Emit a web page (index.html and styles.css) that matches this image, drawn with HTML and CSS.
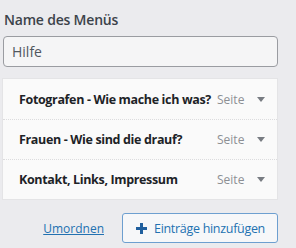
FILE: index.html
```html
<!DOCTYPE html>
<html lang="de">
<head>
<meta charset="utf-8">
<link rel="stylesheet" href="styles.css">
</head>
<body>
<div class="panel">
  <label class="label">Name des Menüs</label>
  <div class="input">Hilfe</div>
  <ul class="items">
    <li class="item"><span class="title">Fotografen - Wie mache ich was?</span><span class="type">Seite</span><span class="arrow"></span></li>
    <li class="item"><span class="title">Frauen - Wie sind die drauf?</span><span class="type">Seite</span><span class="arrow"></span></li>
    <li class="item"><span class="title">Kontakt, Links, Impressum</span><span class="type">Seite</span><span class="arrow"></span></li>
  </ul>
  <div class="actions">
    <a class="reorder" href="#">Umordnen</a>
    <button class="add"><svg width="13" height="13" viewBox="0 0 13 13"><path d="M6.5 1v11M1 6.5h11" stroke="#1f5f9e" stroke-width="3"/></svg><span>Einträge hinzufügen</span></button>
  </div>
</div>
</body>
</html>
```
FILE: styles.css
```css
html, body { margin: 0; padding: 0; }
body {
  background: #ebebee;
  font-family: "Open Sans", "Noto Sans", sans-serif;
  width: 296px;
  height: 248px;
  overflow: hidden;
}
.panel {
  padding: 10px 18px 0 3px;
  display: flex;
  flex-direction: column;
}
.label {
  font-size: 14px;
  font-weight: 600;
  color: #3c434a;
  padding-left: 1px;
  line-height: 20px;
  letter-spacing: -0.2px;
}
.input {
  margin-top: 6px;
  height: 29px;
  border: 1px solid #9a9ca1;
  border-radius: 4px;
  background: #f5f5f6;
  color: #50575e;
  font-size: 14px;
  line-height: 29px;
  padding-left: 8px;
}
.items {
  list-style: none;
  margin: 11px 0 0 -1px;
  padding: 0;
  background: #fafafa;
  border: 1px solid #e4e4e6;
}
.item {
  height: 39px;
  display: flex;
  align-items: center;
  padding: 0 0 0 16px;
  border-top: 1px dotted #dcdcde;
}
.item:first-child { border-top: none; height: 40px; }
.title {
  flex: 1;
  font-size: 12.5px;
  font-weight: 700;
  color: #1d2327;
  letter-spacing: -0.35px;
  white-space: nowrap;
}
.type {
  font-size: 12px;
  color: #8c8f94;
  width: 26px;
  margin-right: 14px;
  text-align: right;
}
.arrow {
  width: 0;
  height: 0;
  border-left: 4px solid transparent;
  border-right: 4px solid transparent;
  border-top: 5px solid #787c82;
  margin-right: 12px;
}
.actions {
  display: flex;
  align-items: center;
  justify-content: flex-end;
  margin-top: 13px;
  gap: 18px;
}
.reorder {
  color: #2271b1;
  font-size: 12px;
  text-decoration: underline;
}
.add {
  display: flex;
  align-items: center;
  gap: 6px;
  height: 30px;
  width: 156px;
  padding: 0 0 0 12px;
  border: 1px solid #6d9fd0;
  border-radius: 3px;
  background: #f6f7f9;
  color: #2271b1;
  font-family: "Open Sans", "Noto Sans", sans-serif;
  font-size: 12.5px;
  white-space: nowrap;
  letter-spacing: -0.3px;
}
```
